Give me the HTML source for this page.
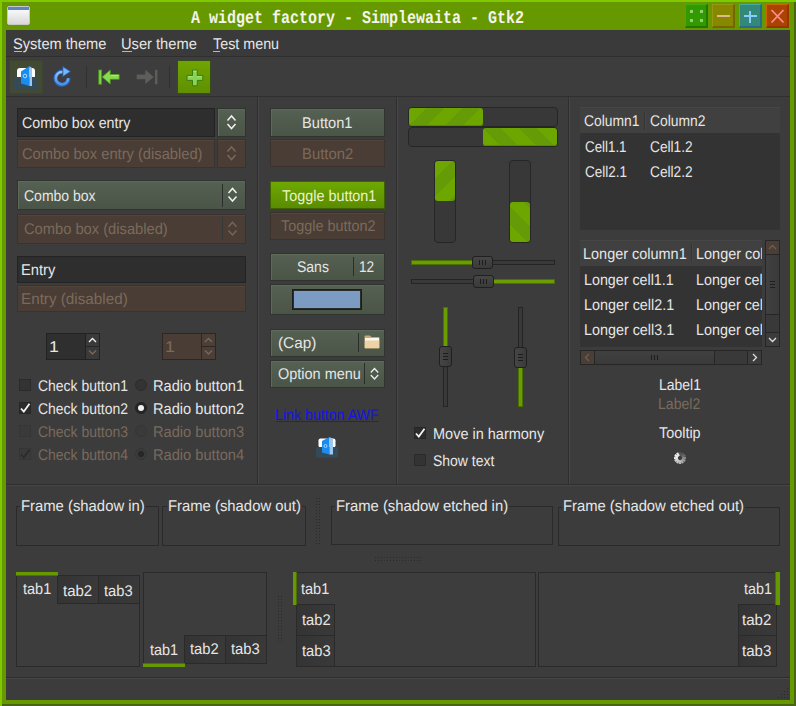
<!DOCTYPE html>
<html><head><meta charset="utf-8">
<style>
html,body{margin:0;padding:0;}
body{width:796px;height:706px;overflow:hidden;position:relative;background:#669900;font-family:"Liberation Sans",sans-serif;}
.a{position:absolute;box-sizing:border-box;}
.t{position:absolute;font:15.5px/16px "Liberation Sans",sans-serif;color:#e6e6e6;white-space:nowrap;transform-origin:0 13px;text-rendering:geometricPrecision;margin-top:1px;}
.dis{color:#7a6a5c;}
.btn{background:linear-gradient(#556152,#4a5447);border:1px solid #2f352e;box-shadow:inset 1px 1px 0 #5e6b5b;}
.trough{background:#383838;border:1px solid #262626;border-radius:4px;}
.slider{background:linear-gradient(#464646,#3a3a3a);border:1px solid #202020;border-radius:3px;}
.slider::after{content:"";position:absolute;left:6px;top:3px;width:5px;height:5px;border-left:1px solid #1c1c1c;border-right:1px solid #1c1c1c;}
.slider::before{content:"";position:absolute;left:9px;top:3px;width:1px;height:5px;background:#1c1c1c;}
.vslider{background:linear-gradient(90deg,#464646,#3a3a3a);border:1px solid #202020;border-radius:3px;}
.vslider::after{content:"";position:absolute;left:3px;top:6px;width:5px;height:5px;border-top:1px solid #1c1c1c;border-bottom:1px solid #1c1c1c;}
.vslider::before{content:"";position:absolute;left:3px;top:9px;width:5px;height:1px;background:#1c1c1c;}
.frame{border:1px solid #2a2a2a;}
.lbl{background:#3c3c3c;padding:0 1px;}
.nb{border:1px solid #2a2a2a;background:#3d3d3d;}
.tab{border:1px solid #2a2a2a;background:linear-gradient(90deg,#343434,#393939);}
.hl{position:absolute;height:1px;background:#2e2e2e;}
.vl{position:absolute;width:1px;background:#2e2e2e;}
</style></head><body>
<svg width="0" height="0" style="position:absolute"><defs><pattern id="dp" width="3" height="3" patternUnits="userSpaceOnUse"><rect width="1" height="1" fill="#2a2a2a"/></pattern></defs></svg>
<!-- window frame -->
<div class="a" style="left:0;top:0;width:796px;height:2px;background:#80c800"></div>
<div class="a" style="left:0;top:0;width:2px;height:706px;background:#80c800"></div>
<div class="a" style="left:794px;top:2px;width:2px;height:704px;background:#486414"></div>
<div class="a" style="left:2px;top:704px;width:794px;height:2px;background:#486414"></div>
<!-- title icon -->
<div class="a" style="left:7px;top:6px;width:23px;height:19px;border-radius:2px;background:linear-gradient(#ffffff,#d8d8d8);border:1px solid #c8c8c8"></div>
<div class="a" style="left:8px;top:7px;width:21px;height:3px;background:#5a85c0"></div>
<div class="t" style="left:191px;top:9px;font:bold 15px/15px 'Liberation Mono',monospace;color:#f4f4ec;transform-origin:0 0;transform:scaleY(1.2)">A widget factory - Simplewaita - Gtk2</div>
<!-- window buttons -->
<div class="a" style="left:685px;top:4px;width:23px;height:24px;background:#339900;border-top:1px solid #44aa11;border-left:1px solid #44aa11;border-right:2px solid #227700;border-bottom:2px solid #227700"></div>
<div class="a" style="left:690px;top:10px;width:3px;height:3px;background:#8fd070"></div>
<div class="a" style="left:700px;top:10px;width:3px;height:3px;background:#8fd070"></div>
<div class="a" style="left:690px;top:19px;width:3px;height:3px;background:#8fd070"></div>
<div class="a" style="left:700px;top:19px;width:3px;height:3px;background:#8fd070"></div>
<div class="a" style="left:712px;top:4px;width:23px;height:24px;background:#888800;border-top:1px solid #999911;border-left:1px solid #999911;border-right:2px solid #776600;border-bottom:2px solid #776600"></div>
<div class="a" style="left:717px;top:15px;width:13px;height:2px;background:#ddbb88"></div>
<div class="a" style="left:739px;top:4px;width:23px;height:24px;background:#338877;border-top:1px solid #44aa99;border-left:1px solid #44aa99;border-right:2px solid #2a6a90;border-bottom:2px solid #2a6a90"></div>
<div class="a" style="left:744px;top:15px;width:13px;height:2px;background:#88ccff"></div>
<div class="a" style="left:749px;top:11px;width:2px;height:12px;background:#88ccff"></div>
<div class="a" style="left:766px;top:4px;width:23px;height:24px;background:#aa4400;border-top:1px solid #cc6600;border-left:1px solid #cc6600;border-right:2px solid #993300;border-bottom:2px solid #993300"></div>
<svg class="a" style="left:766px;top:4px" width="23" height="24"><path d="M5.5 6 L17.5 18.5 M17.5 6 L5.5 18.5" stroke="#ff8c8c" stroke-width="1.8"/></svg>

<!-- content -->
<div class="a" id="content" style="left:6px;top:30px;width:784px;height:670px;background:#3c3c3c"></div>

<!-- menubar -->
<div class="a" style="left:6px;top:30px;width:784px;height:26px;background:#3a3a3a"></div>
<div class="hl" style="left:6px;top:56px;width:784px;background:#2f2f2f"></div>
<div class="t" style="left:13.36px;top:36px;transform:scale(0.943,1)">System theme</div>
<div class="a" style="left:14px;top:51px;width:8px;height:1px;background:#b8b8b8"></div>
<div class="t" style="left:121.45px;top:36px;transform:scale(0.946,1)">User theme</div>
<div class="a" style="left:122px;top:51px;width:10px;height:1px;background:#b8b8b8"></div>
<div class="t" style="left:212.90px;top:36px;transform:scale(0.924,1)">Test menu</div>
<div class="a" style="left:213px;top:51px;width:7px;height:1px;background:#b8b8b8"></div>
<!-- toolbar -->
<div class="a" style="left:6px;top:57px;width:784px;height:39px;background:#3d3d3d"></div>
<div class="hl" style="left:6px;top:96px;width:784px;background:#2f2f2f"></div>
<div class="a" style="left:9px;top:60px;width:34px;height:34px;background:#434a33;border:1px solid #3e4430"></div>
<!-- book icon -->
<svg class="a" style="left:9px;top:60px" width="34" height="34" viewBox="0 0 34 34">
<rect x="8" y="8" width="18" height="12" rx="3" fill="#ffffff"/>
<rect x="5" y="17" width="24" height="12" rx="1.5" fill="#354a58"/>
<path d="M12 11.5 L20.5 6 L20.5 26 L12 23.5 Z" fill="#1a8cf0"/>
<path d="M20.5 6 L23 8 L23 26 L20.5 26 Z" fill="#9cc8f0"/>
<circle cx="16" cy="16" r="1.8" fill="none" stroke="#bfe0ff" stroke-width="0.9"/>
</svg>
<!-- refresh icon -->
<svg class="a" style="left:50px;top:64px" width="24" height="26" viewBox="0 0 24 26">
<defs><linearGradient id="rg" x1="0" y1="0" x2="0" y2="1"><stop offset="0" stop-color="#8cc4fa"/><stop offset="1" stop-color="#4a8ee6"/></linearGradient></defs>
<path d="M18.6 14.2 A6.6 6.6 0 1 1 12.3 7.6" fill="none" stroke="#2a64c4" stroke-width="4"/>
<path d="M12.5 1.8 L21 7.6 L12.5 13.2 Z" fill="#2a64c4"/>
<path d="M18.2 14.2 A6.2 6.2 0 1 1 12.3 8" fill="none" stroke="url(#rg)" stroke-width="2.6"/>
<path d="M13.3 3.4 L19.6 7.6 L13.3 11.7 Z" fill="#74b6f8"/>
</svg>
<div class="vl" style="left:86px;top:66px;height:22px;background:#313131"></div>
<!-- go first -->
<svg class="a" style="left:96px;top:68px" width="26" height="19" viewBox="0 0 26 19">
<rect x="2.8" y="2" width="2.8" height="14.2" fill="#80d444" stroke="#4a9a1a" stroke-width="0.8"/>
<path d="M6.2 8.9 L14.2 2 L14.2 6.6 L23.2 6.6 L23.2 11.3 L14.2 11.3 L14.2 16 Z" fill="#8ada50" stroke="#4a9a1a" stroke-width="0.8"/>
<path d="M14.8 7.4 H22.5" stroke="#b4ee8c" stroke-width="0.9"/>
</svg>
<!-- go last (disabled) -->
<svg class="a" style="left:134px;top:68px" width="26" height="19" viewBox="0 0 26 19">
<rect x="21" y="1.8" width="2.4" height="14.4" fill="#5c5f59"/>
<path d="M19.8 8.9 L11.3 1.8 L11.3 6.6 L2.7 6.6 L2.7 11.3 L11.3 11.3 L11.3 16.1 Z" fill="#5c5f59"/>
</svg>
<div class="vl" style="left:169px;top:66px;height:22px;background:#313131"></div>
<div class="a" style="left:177px;top:60px;width:34px;height:34px;background:linear-gradient(#6fa500,#5f9000);border:1px solid #3a4a20"></div>
<svg class="a" style="left:177px;top:60px" width="34" height="34" viewBox="0 0 34 34">
<path d="M15.5 10.1 H20.3 V15.6 H25.8 V20.4 H20.3 V25.8 H15.5 V20.4 H10 V15.6 H15.5 Z" fill="#88d454" stroke="#3d7a12" stroke-width="1"/>
<path d="M16.2 11.2 H19.6 M10.9 16.7 H15.5 M20.3 16.7 H25" stroke="#a8e48a" stroke-width="1"/>
</svg>
<!-- main separators -->
<div class="vl" style="left:257px;top:97px;height:387px;background:#2e2e2e"></div>
<div class="vl" style="left:258px;top:97px;height:387px;background:#474747"></div>
<div class="vl" style="left:396px;top:97px;height:387px;background:#2e2e2e"></div>
<div class="vl" style="left:397px;top:97px;height:387px;background:#474747"></div>
<div class="vl" style="left:568px;top:97px;height:387px;background:#2e2e2e"></div>
<div class="vl" style="left:569px;top:97px;height:387px;background:#474747"></div>
<div class="hl" style="left:6px;top:484px;width:784px;background:#2e2e2e"></div>
<div class="hl" style="left:6px;top:485px;width:784px;background:#474747"></div>
<div class="hl" style="left:6px;top:677px;width:784px;background:#2e2e2e"></div>
<div class="hl" style="left:6px;top:678px;width:784px;background:#474747"></div>
<!--MAIN-->
<!-- ===== column 1 ===== -->
<div class="a" style="left:17px;top:108px;width:198px;height:29px;background:#2e2e2e;border:1px solid #232323"></div>
<div class="t" style="left:21.80px;top:115px;transform:scale(0.917,1)">Combo box entry</div>
<div class="a btn" style="left:217px;top:108px;width:29px;height:29px"></div>
<svg class="a" style="left:217px;top:108px" width="29" height="29"><path d="M10.5 12.5 L14.5 8 L18.5 12.5 M10.5 16 L14.5 20.5 L18.5 16" fill="none" stroke="#f0f0f0" stroke-width="1.5"/></svg>
<div class="a" style="left:17px;top:139px;width:198px;height:29px;background:#4a3d35;border:1px solid #3b322d;box-shadow:inset 0 1px 0 #54453b"></div>
<div class="t dis" style="left:21.80px;top:146px;transform:scale(0.948,1)">Combo box entry (disabled)</div>
<div class="a" style="left:217px;top:139px;width:29px;height:29px;background:#4a3d35;border:1px solid #3b322d;box-shadow:inset 0 1px 0 #54453b"></div>
<svg class="a" style="left:217px;top:139px" width="29" height="29"><path d="M10.5 12.5 L14.5 8 L18.5 12.5 M10.5 16 L14.5 20.5 L18.5 16" fill="none" stroke="#7a6858" stroke-width="1.5"/></svg>

<div class="a btn" style="left:17px;top:180px;width:229px;height:30px"></div>
<div class="vl" style="left:222px;top:184px;height:23px;background:#2a2e29"></div>
<div class="t" style="left:23.50px;top:188px;transform:scale(0.903,1)">Combo box</div>
<svg class="a" style="left:222px;top:180px" width="24" height="30"><path d="M6.5 13 L10.5 8.5 L14.5 13 M6.5 16.5 L10.5 21 L14.5 16.5" fill="none" stroke="#f0f0f0" stroke-width="1.5"/></svg>
<div class="a" style="left:17px;top:214px;width:229px;height:30px;background:#4a3d35;border:1px solid #3b322d;box-shadow:inset 0 1px 0 #54453b"></div>
<div class="vl" style="left:222px;top:217px;height:23px;background:#363838"></div>
<div class="t dis" style="left:23.50px;top:221px;transform:scale(0.948,1)">Combo box (disabled)</div>
<svg class="a" style="left:222px;top:214px" width="24" height="30"><path d="M6.5 12.8 L10.5 8.3 L14.5 12.8 M6.5 16.5 L10.5 21 L14.5 16.5" fill="none" stroke="#7a6656" stroke-width="1.3"/></svg>

<div class="a" style="left:17px;top:256px;width:229px;height:27px;background:#2e2e2e;border:1px solid #232323"></div>
<div class="t" style="left:20.85px;top:262px;transform:scale(0.949,1)">Entry</div>
<div class="a" style="left:17px;top:285px;width:229px;height:27px;background:#4a3d35;border:1px solid #3b322d;box-shadow:inset 0 1px 0 #54453b"></div>
<div class="t dis" style="left:20.82px;top:291px;transform:scale(0.983,1)">Entry (disabled)</div>

<!-- spin buttons -->
<div class="a" style="left:46px;top:333px;width:54px;height:27px;background:#2f2f2f;border:1px solid #222"></div>
<div class="a" style="left:85px;top:334px;width:1px;height:25px;background:#222"></div>
<div class="a" style="left:86px;top:334px;width:13px;height:25px;background:#3a3a3a"></div>
<div class="a" style="left:86px;top:346px;width:13px;height:1px;background:#262626"></div>
<svg class="a" style="left:86px;top:334px" width="13" height="25"><path d="M3 8 L6.5 4.5 L10 8" fill="none" stroke="#f0f0f0" stroke-width="1.4"/><path d="M3 16.5 L6.5 20 L10 16.5" fill="none" stroke="#7a6858" stroke-width="1.4"/></svg>
<div class="t" style="left:48.56px;top:339px;transform:scale(1.143,1)">1</div>
<div class="a" style="left:162px;top:333px;width:54px;height:27px;background:#4a3d35;border:1px solid #2c2724"></div>
<div class="a" style="left:201px;top:334px;width:1px;height:25px;background:#2c2724"></div>
<div class="a" style="left:202px;top:334px;width:13px;height:25px;background:#4b3f37"></div>
<div class="a" style="left:202px;top:346px;width:13px;height:1px;background:#2c2724"></div>
<svg class="a" style="left:202px;top:334px" width="13" height="25"><path d="M3 8 L6.5 4.5 L10 8" fill="none" stroke="#7a6858" stroke-width="1.4"/><path d="M3 16.5 L6.5 20 L10 16.5" fill="none" stroke="#7a6858" stroke-width="1.4"/></svg>
<div class="t dis" style="left:164.86px;top:339px;transform:scale(1.143,1)">1</div>

<!-- check / radio -->
<div class="a" style="left:19px;top:379px;width:12px;height:12px;background:#333;border:1px solid #2a2a2a"></div>
<div class="t" style="left:38.30px;top:378px;transform:scale(0.900,1)">Check button1</div>
<div class="a" style="left:19px;top:402px;width:12px;height:12px;background:#2c2c2c;border:1px solid #262626"></div>
<svg class="a" style="left:19px;top:402px" width="12" height="12"><path d="M2 6.5 L4.8 9.5 L10.5 1.8" fill="none" stroke="#f4f4f4" stroke-width="1.8"/></svg>
<div class="t" style="left:38.30px;top:401px;transform:scale(0.900,1)">Check button2</div>
<div class="a" style="left:19px;top:425px;width:12px;height:12px;background:#3a3a3a;border:1px solid #353535"></div>
<div class="t dis" style="left:38.30px;top:424px;transform:scale(0.900,1)">Check button3</div>
<div class="a" style="left:19px;top:448px;width:12px;height:12px;background:#3a3a3a;border:1px solid #353535"></div>
<svg class="a" style="left:19px;top:448px" width="12" height="12"><path d="M2 6.5 L4.8 9.5 L10.5 1.8" fill="none" stroke="#2a2a2a" stroke-width="1.6"/></svg>
<div class="t dis" style="left:38.30px;top:447px;transform:scale(0.900,1)">Check button4</div>

<div class="a" style="left:135px;top:379px;width:12px;height:12px;border-radius:50%;background:#333;border:1px solid #2d2d2d"></div>
<div class="t" style="left:153.36px;top:378px;transform:scale(0.944,1)">Radio button1</div>
<div class="a" style="left:135px;top:402px;width:12px;height:12px;border-radius:50%;background:#262626;border:1px solid #222"></div>
<div class="a" style="left:138px;top:405px;width:6px;height:6px;border-radius:50%;background:#f0f0f0"></div>
<div class="t" style="left:153.36px;top:401px;transform:scale(0.944,1)">Radio button2</div>
<div class="a" style="left:135px;top:425px;width:12px;height:12px;border-radius:50%;background:#3a3a3a;border:1px solid #363636"></div>
<div class="t dis" style="left:153.36px;top:424px;transform:scale(0.944,1)">Radio button3</div>
<div class="a" style="left:135px;top:448px;width:12px;height:12px;border-radius:50%;background:#3a3a3a;border:1px solid #363636"></div>
<div class="a" style="left:138px;top:451px;width:6px;height:6px;border-radius:50%;background:#262626"></div>
<div class="t dis" style="left:153.36px;top:447px;transform:scale(0.944,1)">Radio button4</div>

<!-- ===== column 2 ===== -->
<div class="a btn" style="left:270px;top:108px;width:115px;height:29px"></div>
<div class="t" style="left:301.76px;top:115px;transform:scale(0.944,1)">Button1</div>
<div class="a" style="left:270px;top:139px;width:115px;height:28px;background:#4a3d35;border:1px solid #3b322d;box-shadow:inset 0 1px 0 #54453b"></div>
<div class="t dis" style="left:301.74px;top:146px;transform:scale(0.958,1)">Button2</div>
<div class="a" style="left:270px;top:181px;width:115px;height:28px;background:linear-gradient(#6fa800,#5a8c00);border:1px solid #3f6300"></div>
<div class="t" style="left:282.00px;top:188px;color:#eaf4c8;transform:scale(0.928,1)">Toggle button1</div>
<div class="a" style="left:270px;top:212px;width:115px;height:28px;background:#4a3d35;border:1px solid #3b322d;box-shadow:inset 0 1px 0 #54453b"></div>
<div class="t dis" style="left:280.70px;top:218px;transform:scale(0.929,1)">Toggle button2</div>

<div class="a btn" style="left:270px;top:253px;width:115px;height:28px"></div>
<div class="t" style="left:297.40px;top:259px;transform:scale(0.903,1)">Sans</div>
<div class="vl" style="left:353px;top:257px;height:19px;background:#2a2e29"></div>
<div class="t" style="left:359.12px;top:259px;transform:scale(0.881,1)">12</div>
<div class="a btn" style="left:270px;top:284px;width:115px;height:31px"></div>
<div class="a" style="left:292px;top:289px;width:70px;height:21px;background:#7b9bc2;border:1px solid #1c1c1c;box-shadow:inset 0 0 0 1px #2c2c2c"></div>

<div class="a btn" style="left:270px;top:329px;width:115px;height:28px"></div>
<div class="t" style="left:278.41px;top:335px;transform:scale(0.989,1)">(Cap)</div>
<div class="vl" style="left:358px;top:333px;height:19px;background:#2a2e29"></div>
<svg class="a" style="left:364px;top:335px" width="16" height="14" viewBox="0 0 16 14">
<path d="M0.5 1.5 Q0.5 0.5 1.5 0.5 L6 0.5 L7.5 2 L14.5 2 Q15.5 2 15.5 3 L15.5 12.5 Q15.5 13.5 14.5 13.5 L1.5 13.5 Q0.5 13.5 0.5 12.5 Z" fill="#c9a878"/>
<rect x="1" y="3" width="14" height="3" fill="#fbf6ee"/>
<rect x="0.8" y="5.5" width="14.4" height="7.6" fill="#ecd2a4"/>
</svg>
<div class="a btn" style="left:270px;top:360px;width:115px;height:28px"></div>
<div class="t" style="left:278.30px;top:366px;transform:scale(0.934,1)">Option menu</div>
<div class="vl" style="left:364px;top:363px;height:21px;background:#2a2e29"></div>
<svg class="a" style="left:364px;top:360px" width="21" height="28"><path d="M6.8 12.5 L10.5 8.5 L14.2 12.5 M6.8 15 L10.5 19 L14.2 15" fill="none" stroke="#eeeeee" stroke-width="1.3"/></svg>

<div class="t" style="left:275.38px;top:407px;color:#1414e6;transform:scale(0.916,1)">Link button AWF</div>
<div class="a" style="left:276px;top:421px;width:103px;height:1px;background:#1414e6"></div>
<svg class="a" style="left:316px;top:436px" width="23" height="22" viewBox="0 0 23 22">
<rect x="2.5" y="2.5" width="17" height="9" rx="2" fill="#ffffff"/>
<rect x="0" y="11" width="22" height="10.5" rx="1.5" fill="#354a58"/>
<path d="M6 5 L13.5 1 L13.5 18.5 L6 16.5 Z" fill="#1a8cf0"/>
<path d="M13.5 1 L17 3 L17 18.5 L13.5 18.5 Z" fill="#9cc8f0"/>
<circle cx="9.5" cy="10" r="1.5" fill="none" stroke="#bfe0ff" stroke-width="0.8"/>
</svg>

<!-- ===== column 3 ===== -->
<div class="a trough" style="left:408px;top:107px;width:150px;height:20px"></div>
<div class="a" style="left:409px;top:108px;width:74px;height:18px;border-radius:3px;background:repeating-linear-gradient(135deg,#6ea600 0,#6ea600 12.7px,#659b06 12.7px,#659b06 25.4px);box-shadow:inset 0 -1px 0 #5a8a00"></div>
<div class="a trough" style="left:408px;top:127px;width:150px;height:20px"></div>
<div class="a" style="left:483px;top:128px;width:74px;height:18px;border-radius:3px;background:repeating-linear-gradient(45deg,#6ea600 0,#6ea600 12.7px,#659b06 12.7px,#659b06 25.4px);box-shadow:inset 0 -1px 0 #5a8a00"></div>
<div class="a trough" style="left:434px;top:160px;width:22px;height:83px"></div>
<div class="a" style="left:435px;top:161px;width:20px;height:40px;border-radius:3px;background:repeating-linear-gradient(135deg,#6ea600 0,#6ea600 12.7px,#659b06 12.7px,#659b06 25.4px)"></div>
<div class="a trough" style="left:509px;top:160px;width:22px;height:83px"></div>
<div class="a" style="left:510px;top:202px;width:20px;height:40px;border-radius:3px;background:repeating-linear-gradient(45deg,#6ea600 0,#6ea600 12.7px,#659b06 12.7px,#659b06 25.4px)"></div>

<!-- hscales -->
<div class="a" style="left:411px;top:260px;width:144px;height:5px;background:#393939;border:1px solid #242424"></div>
<div class="a" style="left:411px;top:260px;width:62px;height:5px;background:#6a9e00;border:1px solid #4a7000"></div>
<div class="a slider" style="left:472px;top:256px;width:21px;height:13px"></div>
<div class="a" style="left:411px;top:279px;width:144px;height:5px;background:#393939;border:1px solid #242424"></div>
<div class="a" style="left:493px;top:279px;width:62px;height:5px;background:#6a9e00;border:1px solid #4a7000"></div>
<div class="a slider" style="left:473px;top:275px;width:21px;height:13px"></div>
<!-- vscales -->
<div class="a" style="left:443px;top:307px;width:5px;height:100px;background:#393939;border:1px solid #242424"></div>
<div class="a" style="left:443px;top:307px;width:5px;height:40px;background:#6a9e00;border:1px solid #4a7000"></div>
<div class="a vslider" style="left:439px;top:346px;width:13px;height:21px"></div>
<div class="a" style="left:518px;top:307px;width:5px;height:100px;background:#393939;border:1px solid #242424"></div>
<div class="a" style="left:518px;top:367px;width:5px;height:40px;background:#6a9e00;border:1px solid #4a7000"></div>
<div class="a vslider" style="left:514px;top:347px;width:13px;height:21px"></div>

<div class="a" style="left:414px;top:427px;width:12px;height:12px;background:#2c2c2c;border:1px solid #262626"></div>
<svg class="a" style="left:414px;top:427px" width="12" height="12"><path d="M2 6.5 L4.8 9.5 L10.5 1.8" fill="none" stroke="#f4f4f4" stroke-width="1.8"/></svg>
<div class="t" style="left:432.67px;top:426px;transform:scale(0.935,1)">Move in harmony</div>
<div class="a" style="left:414px;top:454px;width:12px;height:12px;background:#333;border:1px solid #2a2a2a"></div>
<div class="t" style="left:432.70px;top:453px;transform:scale(0.900,1)">Show text</div>

<!-- ===== column 4 ===== -->
<div class="a" style="left:580px;top:107px;width:200px;height:26px;background:#404040;border-top:1px solid #464646"></div>
<div class="vl" style="left:644px;top:112px;height:18px;background:#343434"></div>
<div class="vl" style="left:645px;top:112px;height:18px;background:#474747"></div>
<div class="a" style="left:580px;top:133px;width:200px;height:97px;background:#333333"></div>
<div class="t" style="left:583.60px;top:113px;transform:scale(0.894,1)">Column1</div>
<div class="t" style="left:649.60px;top:113px;transform:scale(0.894,1)">Column2</div>
<div class="t" style="left:584.70px;top:139px;transform:scale(0.860,1)">Cell1.1</div>
<div class="t" style="left:650.40px;top:139px;transform:scale(0.883,1)">Cell1.2</div>
<div class="t" style="left:584.70px;top:164px;transform:scale(0.871,1)">Cell2.1</div>
<div class="t" style="left:650.40px;top:164px;transform:scale(0.883,1)">Cell2.2</div>

<div class="a" style="left:580px;top:240px;width:182px;height:107px;overflow:hidden">
 <div class="a" style="left:0;top:0;width:182px;height:26px;background:#404040;border-top:1px solid #464646"></div>
 <div class="vl" style="left:111px;top:4px;height:18px;background:#343434"></div>
 <div class="vl" style="left:112px;top:4px;height:18px;background:#474747"></div>
 <div class="a" style="left:0;top:26px;width:182px;height:81px;background:#333333"></div>
 <div class="t" style="left:2.67px;top:6px;transform:scale(0.933,1)">Longer column1</div>
 <div class="t" style="left:116.27px;top:6px;transform:scale(0.933,1)">Longer column2</div>
 <div class="t" style="left:3.78px;top:32px;transform:scale(0.921,1)">Longer cell1.1</div>
 <div class="t" style="left:116.28px;top:32px;transform:scale(0.921,1)">Longer cell1.2</div>
 <div class="t" style="left:3.77px;top:57px;transform:scale(0.926,1)">Longer cell2.1</div>
 <div class="t" style="left:116.27px;top:57px;transform:scale(0.926,1)">Longer cell2.2</div>
 <div class="t" style="left:3.77px;top:82px;transform:scale(0.926,1)">Longer cell3.1</div>
 <div class="t" style="left:116.27px;top:82px;transform:scale(0.926,1)">Longer cell3.2</div>
</div>
<!-- v scrollbar -->
<div class="a" style="left:765px;top:240px;width:15px;height:107px;background:#393939;border:1px solid #262626"></div>
<div class="a" style="left:766px;top:241px;width:13px;height:13px;background:#4a3e36"></div>
<div class="a" style="left:766px;top:254px;width:13px;height:1px;background:#262626"></div>
<svg class="a" style="left:766px;top:241px" width="13" height="13"><path d="M3 8 L6.5 4.5 L10 8" fill="none" stroke="#6e5e50" stroke-width="1.3"/></svg>
<div class="a" style="left:766px;top:255px;width:13px;height:60px;background:linear-gradient(90deg,#404040,#3a3a3a);border-bottom:1px solid #262626"></div>
<div class="a" style="left:770px;top:281px;width:5px;height:1px;background:#1e1e1e;box-shadow:0 3px 0 #1e1e1e,0 6px 0 #1e1e1e"></div>
<div class="a" style="left:766px;top:332px;width:13px;height:1px;background:#262626"></div>
<div class="a" style="left:766px;top:333px;width:13px;height:13px;background:#3c3c3c"></div>
<svg class="a" style="left:766px;top:333px" width="13" height="13"><path d="M3 5 L6.5 8.5 L10 5" fill="none" stroke="#e0e0e0" stroke-width="1.3"/></svg>
<!-- h scrollbar -->
<div class="a" style="left:580px;top:350px;width:182px;height:15px;background:#393939;border:1px solid #262626"></div>
<div class="a" style="left:581px;top:351px;width:13px;height:13px;background:#4a3e36"></div>
<div class="a" style="left:594px;top:351px;width:1px;height:13px;background:#262626"></div>
<svg class="a" style="left:581px;top:351px" width="13" height="13"><path d="M8 3 L4.5 6.5 L8 10" fill="none" stroke="#6e5e50" stroke-width="1.3"/></svg>
<div class="a" style="left:595px;top:351px;width:120px;height:13px;background:linear-gradient(#404040,#3a3a3a);border-right:1px solid #262626"></div>
<div class="a" style="left:651px;top:355px;width:1px;height:5px;background:#1e1e1e;box-shadow:3px 0 0 #1e1e1e,6px 0 0 #1e1e1e"></div>
<div class="a" style="left:747px;top:351px;width:1px;height:13px;background:#262626"></div>
<div class="a" style="left:748px;top:351px;width:13px;height:13px;background:#3c3c3c"></div>
<svg class="a" style="left:748px;top:351px" width="13" height="13"><path d="M5 3 L8.5 6.5 L5 10" fill="none" stroke="#e0e0e0" stroke-width="1.3"/></svg>

<div class="t" style="left:659.00px;top:377px;transform:scale(0.902,1)">Label1</div>
<div class="t dis" style="left:658.29px;top:396px;transform:scale(0.907,1)">Label2</div>
<div class="t" style="left:659.20px;top:425px;transform:scale(0.929,1)">Tooltip</div>
<svg class="a" style="left:672px;top:450px" width="16" height="16" viewBox="-8 -8 16 16"><g stroke-width="2.3"><line x1="0" y1="-6" x2="0" y2="-2.2" stroke="#525252" transform="rotate(0)"/><line x1="0" y1="-6" x2="0" y2="-2.2" stroke="#5a5a5a" transform="rotate(30)"/><line x1="0" y1="-6" x2="0" y2="-2.2" stroke="#6c6c6c" transform="rotate(60)"/><line x1="0" y1="-6" x2="0" y2="-2.2" stroke="#858585" transform="rotate(90)"/><line x1="0" y1="-6" x2="0" y2="-2.2" stroke="#989898" transform="rotate(120)"/><line x1="0" y1="-6" x2="0" y2="-2.2" stroke="#a8a8a8" transform="rotate(150)"/><line x1="0" y1="-6" x2="0" y2="-2.2" stroke="#b8b8b8" transform="rotate(180)"/><line x1="0" y1="-6" x2="0" y2="-2.2" stroke="#c8c8c8" transform="rotate(210)"/><line x1="0" y1="-6" x2="0" y2="-2.2" stroke="#d6d6d6" transform="rotate(240)"/><line x1="0" y1="-6" x2="0" y2="-2.2" stroke="#e4e4e4" transform="rotate(270)"/><line x1="0" y1="-6" x2="0" y2="-2.2" stroke="#eeeeee" transform="rotate(300)"/><line x1="0" y1="-6" x2="0" y2="-2.2" stroke="#e6e6e6" transform="rotate(330)"/></g></svg>

<!-- ===== bottom: frames ===== -->
<div class="a frame" style="left:16px;top:506px;width:143px;height:40px"></div>
<div class="t lbl" style="left:20.44px;top:498px;transform:scale(0.958,1)">Frame (shadow in)</div>
<div class="a frame" style="left:162px;top:506px;width:144px;height:40px"></div>
<div class="t lbl" style="left:166.94px;top:498px;transform:scale(0.958,1)">Frame (shadow out)</div>
<svg class="a" style="left:316px;top:498px" width="6" height="48"><rect width="6" height="48" fill="url(#dp)"/></svg>
<div class="a frame" style="left:331px;top:506px;width:222px;height:39px"></div>
<div class="t lbl" style="left:335.44px;top:498px;transform:scale(0.956,1)">Frame (shadow etched in)</div>
<div class="a frame" style="left:558px;top:507px;width:222px;height:39px"></div>
<div class="t lbl" style="left:561.55px;top:498px;transform:scale(0.955,1)">Frame (shadow etched out)</div>
<svg class="a" style="left:375px;top:557px" width="48" height="6"><rect width="48" height="6" fill="url(#dp)"/></svg>

<!-- ===== notebooks ===== -->
<!-- nb1 top tabs -->
<div class="a nb" style="left:16px;top:575px;width:124px;height:92px"></div>
<div class="a tab" style="left:57px;top:575px;width:42px;height:29px"></div>
<div class="a tab" style="left:98px;top:575px;width:42px;height:29px"></div>
<div class="a" style="left:17px;top:576px;width:40px;height:30px;background:#3d3d3d"></div>
<div class="a" style="left:16px;top:572px;width:42px;height:4px;background:#669900;border-bottom:1px solid #4d6d10"></div>
<div class="t" style="left:23.20px;top:581px;transform:scale(0.937,1)">tab1</div>
<div class="t" style="left:62.80px;top:583px;transform:scale(0.967,1)">tab2</div>
<div class="t" style="left:104.10px;top:583px;transform:scale(0.950,1)">tab3</div>
<!-- nb2 bottom tabs -->
<div class="a nb" style="left:143px;top:572px;width:124px;height:92px"></div>
<div class="a tab" style="left:184px;top:635px;width:42px;height:29px"></div>
<div class="a tab" style="left:225px;top:635px;width:42px;height:29px"></div>
<div class="a" style="left:144px;top:634px;width:40px;height:29px;background:#3d3d3d"></div>
<div class="a" style="left:143px;top:663px;width:42px;height:4px;background:#669900;border-top:1px solid #4d6d10"></div>
<div class="t" style="left:150.00px;top:642px;transform:scale(0.933,1)">tab1</div>
<div class="t" style="left:190.00px;top:641px;transform:scale(0.950,1)">tab2</div>
<div class="t" style="left:231.30px;top:641px;transform:scale(0.953,1)">tab3</div>
<svg class="a" style="left:278px;top:596px" width="6" height="48"><rect width="6" height="48" fill="url(#dp)"/></svg>
<!-- nb3 left tabs -->
<div class="a nb" style="left:296px;top:572px;width:240px;height:95px"></div>
<div class="a tab" style="left:296px;top:604px;width:39px;height:32px"></div>
<div class="a tab" style="left:296px;top:635px;width:39px;height:32px"></div>
<div class="a" style="left:297px;top:573px;width:39px;height:31px;background:#3d3d3d"></div>
<div class="a" style="left:293px;top:572px;width:4px;height:33px;background:#669900;border-right:1px solid #4d6d10"></div>
<div class="t" style="left:301.20px;top:581px;transform:scale(0.937,1)">tab1</div>
<div class="t" style="left:302.30px;top:612px;transform:scale(0.950,1)">tab2</div>
<div class="t" style="left:302.30px;top:643px;transform:scale(0.950,1)">tab3</div>
<!-- nb4 right tabs -->
<div class="a nb" style="left:538px;top:572px;width:239px;height:95px"></div>
<div class="a tab" style="left:738px;top:604px;width:39px;height:32px"></div>
<div class="a tab" style="left:738px;top:635px;width:39px;height:32px"></div>
<div class="a" style="left:738px;top:573px;width:38px;height:31px;background:#3d3d3d"></div>
<div class="a" style="left:775px;top:572px;width:5px;height:33px;background:#669900;border-left:1px solid #4d6d10"></div>
<div class="t" style="left:744.00px;top:581px;transform:scale(0.927,1)">tab1</div>
<div class="t" style="left:741.80px;top:612px;transform:scale(0.973,1)">tab2</div>
<div class="t" style="left:741.80px;top:643px;transform:scale(0.973,1)">tab3</div>
<!-- resize grip -->
<svg class="a" style="left:778px;top:688px" width="10" height="10" fill="#282828"><rect x="9" y="0" width="1" height="1"/><rect x="6" y="3" width="1" height="1"/><rect x="9" y="3" width="1" height="1"/><rect x="3" y="6" width="1" height="1"/><rect x="6" y="6" width="1" height="1"/><rect x="9" y="6" width="1" height="1"/><rect x="0" y="9" width="1" height="1"/><rect x="3" y="9" width="1" height="1"/><rect x="6" y="9" width="1" height="1"/><rect x="9" y="9" width="1" height="1"/></svg>





</body></html>
